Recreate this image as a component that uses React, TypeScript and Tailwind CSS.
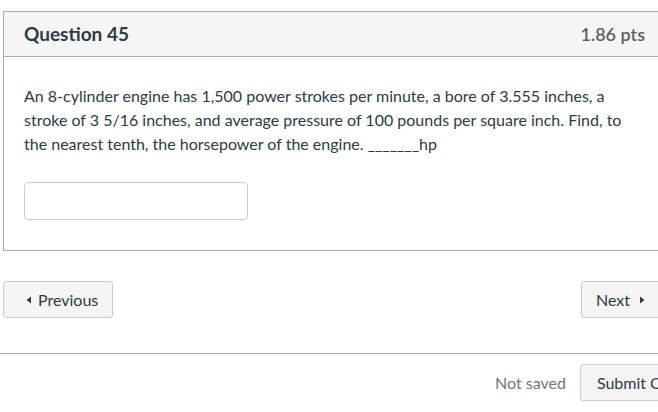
import React from "react";

function TriLeft() {
  return (
    <svg width="6" height="8" viewBox="0 0 6 8" className="shrink-0">
      <path d="M5 0.5 L0.5 4 L5 7.5 Z" fill="#2d3b45" />
    </svg>
  );
}
function TriRight() {
  return (
    <svg width="6" height="8" viewBox="0 0 6 8" className="shrink-0">
      <path d="M1 0.5 L5.5 4 L1 7.5 Z" fill="#2d3b45" />
    </svg>
  );
}

export default function App() {
  return (
    <div
      className="w-[658px] h-[412px] overflow-hidden bg-white text-[#2d3b45]"
      style={{ fontFamily: "Lato, 'Liberation Sans', sans-serif" }}
    >
      <div className="pt-[11px] pl-[3px]">
        <div className="w-[663px] border border-[#a9a9a9]">
          <div className="h-[45px] bg-[#f5f5f5] border-b border-[#a9a9a9] px-[20px] flex items-center justify-between">
            <span className="text-[19px] font-bold text-[#2d3b45]">Question 45</span>
            <span className="text-[18px] font-semibold text-[#5b6166]">1.86 pts</span>
          </div>
          <div className="px-[20px] pt-[27px] pb-[30px]">
            <p className="text-[16px] leading-[24px] text-[#2d3b45]">
              An 8-cylinder engine has 1,500 power strokes per minute, a bore of 3.555 inches, a stroke of 3 5/16 inches, and average pressure of 100 pounds per square inch. Find, to the nearest tenth, the horsepower of the engine. _______hp
            </p>
            <div className="mt-[26px] w-[224px] h-[38px] border border-[#c7cdd1] rounded-[4px] bg-white" />
          </div>
        </div>
      </div>

      <div className="mt-[30px] pl-[3px] flex justify-between w-[672px]">
        <button className="h-[37px] w-[110px] bg-[#f5f5f5] border border-[#c7cdd1] rounded-[3px] flex items-center justify-start pl-[22px] gap-[6px] text-[16px] text-[#2d3b45]">
          <TriLeft />
          <span>Previous</span>
        </button>
        <button className="h-[37px] w-[91px] bg-[#f5f5f5] border border-[#c7cdd1] rounded-[3px] flex items-center gap-[9px] pl-[14px] text-[16px] text-[#2d3b45]">
          <span>Next</span>
          <TriRight />
        </button>
      </div>

      <div className="mt-[35px] border-t border-[#a9a9a9] w-[658px]" />

      <div className="mt-[10px] flex items-center pl-[495px] w-[760px]">
        <span className="text-[16px] text-[#6b7780]">Not saved</span>
        <button className="ml-[14px] h-[37px] w-[120px] bg-[#f5f5f5] border border-[#c7cdd1] rounded-[3px] flex items-center pl-[16px] text-[16px] text-[#2d3b45] shrink-0 whitespace-nowrap">
          Submit Quiz
        </button>
      </div>
    </div>
  );
}
